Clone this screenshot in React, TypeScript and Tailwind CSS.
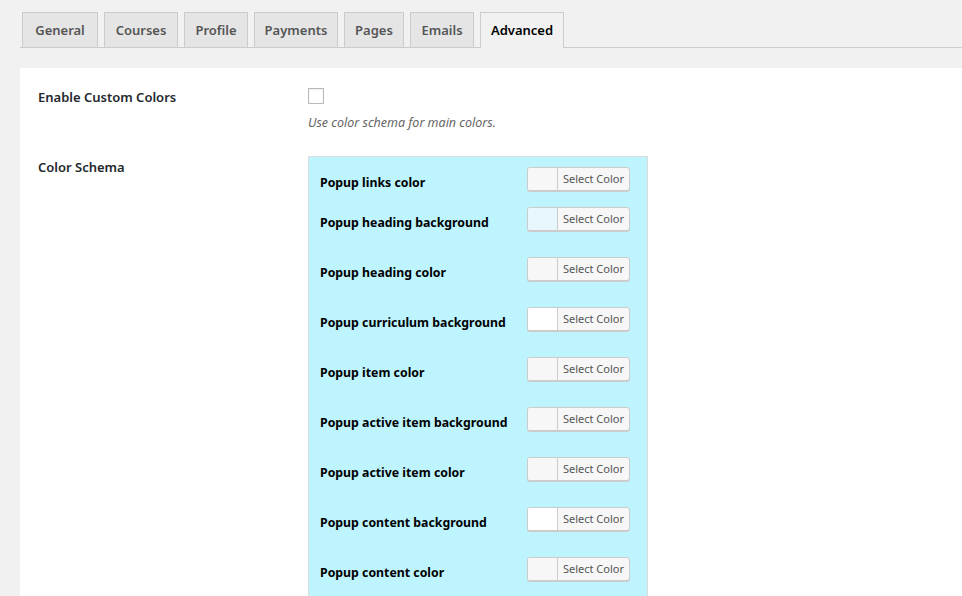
const tabs = [
    {name: "General", w: "w-[76px]"},
    {name: "Courses", w: "w-[74px]"},
    {name: "Profile", w: "w-[64px]"},
    {name: "Payments", w: "w-[84px]"},
    {name: "Pages", w: "w-[60px]"},
    {name: "Emails", w: "w-[64px]"},
    {name: "Advanced", w: "w-[84px]"},
];

const colorRows = [
    {label: "Popup links color", swatch: "bg-[#f7f7f7]", h: "h-[40px]"},
    {label: "Popup heading background", swatch: "bg-[#e8f7fd]", h: "h-[50px]"},
    {label: "Popup heading color", swatch: "bg-[#f7f7f7]", h: "h-[50px]"},
    {label: "Popup curriculum background", swatch: "bg-white", h: "h-[50px]"},
    {label: "Popup item color", swatch: "bg-[#f7f7f7]", h: "h-[50px]"},
    {label: "Popup active item background", swatch: "bg-[#f7f7f7]", h: "h-[50px]"},
    {label: "Popup active item color", swatch: "bg-[#f7f7f7]", h: "h-[50px]"},
    {label: "Popup content background", swatch: "bg-white", h: "h-[50px]"},
    {label: "Popup content color", swatch: "bg-[#f7f7f7]", h: "h-[50px]"},
];

function ColorButton({swatch}: { swatch: string }) {
    return (
        <div className="flex w-[103px] h-[24px] rounded-[3px] border border-[#ccc] bg-[#f7f7f7] shadow-[0_1px_0_#ccc] overflow-hidden">
            <div className={`w-[30px] h-full border-r border-[#ccc] ${swatch}`}/>
            <div className="flex-1 flex items-center justify-center text-[11px] text-[#555] leading-none pb-[1px]">
                Select Color
            </div>
        </div>
    );
}

export default function App() {
    return (
        <div className="w-[962px] h-[596px] overflow-hidden bg-[#f1f1f1] pt-[12px] pl-[20px] font-['Noto_Sans',sans-serif]">
            <div className="flex gap-[6px] pl-[2px] border-b border-[#ccc] h-[36px]">
                {tabs.map((t) => (
                    <div
                        key={t.name}
                        className={t.name === "Advanced"
                            ? `${t.w} h-[36px] pt-[1px] flex items-center justify-center border border-[#ccc] border-b-0 bg-[#f1f1f1] text-[13px] font-semibold text-black -mb-px`
                            : `${t.w} h-[35px] pt-[2px] flex items-center justify-center border border-[#ccc] border-b-0 bg-[#e5e5e5] text-[13px] font-semibold text-[#555]`}
                    >
                        {t.name}
                    </div>
                ))}
            </div>

            <div className="mt-[20px] bg-white h-[600px] pl-[18px] pt-[20px]">
                <div className="flex">
                    <div className="w-[270px] text-[13px] font-semibold text-[#23282d] leading-[18px]">
                        Enable Custom Colors
                    </div>
                    <div>
                        <div className="w-[16px] h-[16px] border border-[#b4b9be] bg-white shadow-[inset_0_1px_2px_rgba(0,0,0,0.07)]"/>
                        <p className="mt-[10px] text-[12.5px] italic text-[#666]">Use color schema for main colors.</p>
                    </div>
                </div>

                <div className="flex mt-[23px]">
                    <div className="w-[270px] pt-[2px] text-[13px] font-semibold text-[#23282d] leading-[18px]">
                        Color Schema
                    </div>
                    <div className="w-[340px] border border-[#dcdcdc] bg-[#bdf4fe] pt-[10px] pl-[11px]">
                        {colorRows.map((r) => (
                            <div key={r.label} className={`flex ${r.h}`}>
                                <div className="w-[207px] pt-[7px] text-[12.3px] font-bold text-black leading-[18px]">
                                    {r.label}
                                </div>
                                <ColorButton swatch={r.swatch}/>
                            </div>
                        ))}
                    </div>
                </div>
            </div>
        </div>
    );
}
